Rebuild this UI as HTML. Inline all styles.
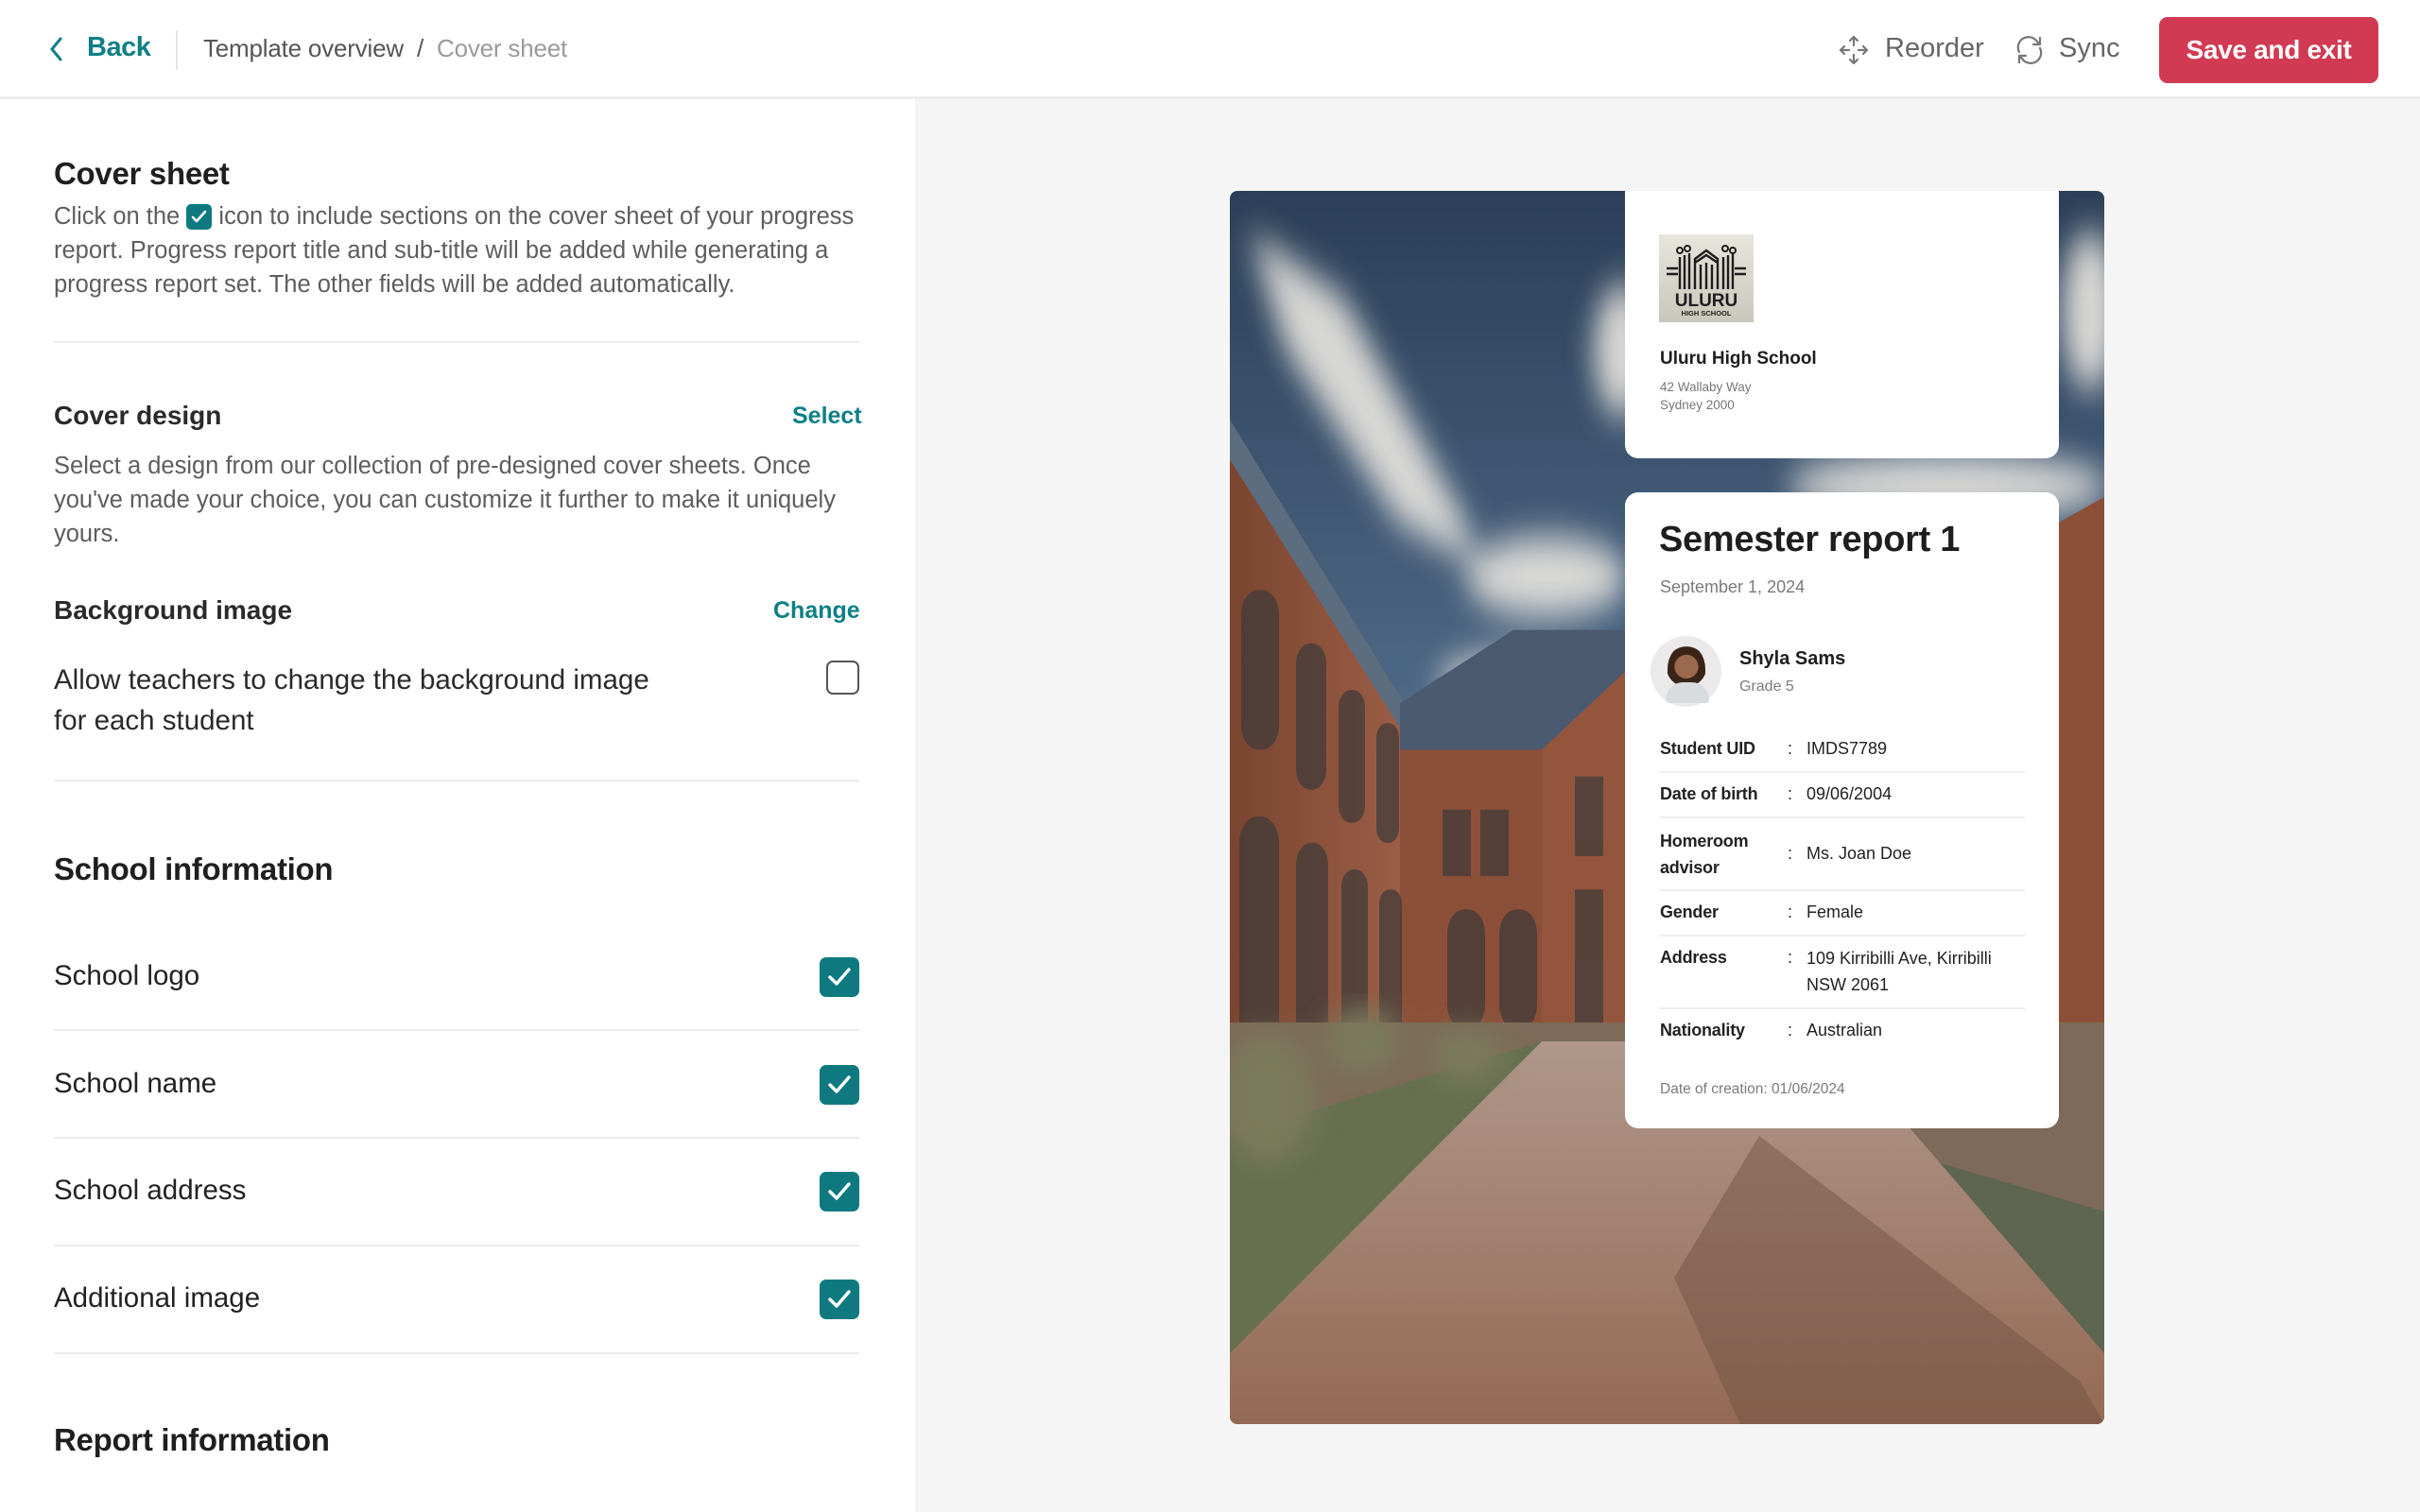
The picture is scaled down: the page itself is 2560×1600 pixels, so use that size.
<!DOCTYPE html>
<html><head><meta charset="utf-8"><style>
*{margin:0;padding:0;box-sizing:border-box}
body{width:2560px;height:1600px;overflow:hidden;font-family:"Liberation Sans",sans-serif;background:#fff;color:#222;position:relative}
.hdr{position:absolute;left:0;top:0;width:2560px;height:105px;background:#fff;border-bottom:3px solid #ececec}
.abs{position:absolute;white-space:nowrap}
.left{position:absolute;left:0;top:105px;width:968px;height:1495px;background:#fff}
.right{position:absolute;left:968px;top:105px;width:1592px;height:1495px;background:#f5f5f5}
.p{font-size:25.5px;color:#5d5d5d;letter-spacing:0;line-height:36px}
.h2{font-size:33px;font-weight:bold;color:#1f1f1f;letter-spacing:-0.3px}
.h3{font-size:29.5px;color:#222;letter-spacing:0}
.teal{color:#0e7f86}
.hr{position:absolute;left:57px;width:852px;height:2px;background:#ebebeb}
.cb{position:absolute;left:867px;width:42px;height:42px;border-radius:7px;background:#0e7a80}
.cb svg{position:absolute;left:7px;top:8px}
.card{position:absolute;left:1719px;width:459px;background:#fff}
.lbl{font-size:18px;font-weight:bold;color:#222;letter-spacing:-0.2px}
.val{font-size:18px;color:#222}
.rl{position:absolute;left:1755px;width:387px;height:2px;background:#eeeeee}
</style></head><body>
<div class="hdr"></div>
<svg class="abs" style="left:50px;top:38px" width="20" height="28" viewBox="0 0 20 28"><path d="M14 3 L5 14 L14 25" fill="none" stroke="#0e7f86" stroke-width="3" stroke-linecap="round"/></svg>
<div class="abs teal" style="left:92px;top:34px;font-size:29px;font-weight:bold;letter-spacing:-0.5px">Back</div>
<div class="abs" style="left:186px;top:32px;width:2px;height:42px;background:#e6e6e6"></div>
<div class="abs" style="left:215px;top:36px;font-size:26px;color:#555;letter-spacing:-0.2px">Template overview&nbsp; / &nbsp;<span style="color:#9a9a9a">Cover sheet</span></div>
<svg class="abs" style="left:1944px;top:36px" width="34" height="34" viewBox="0 0 34 34" fill="none" stroke="#777" stroke-width="2.2" stroke-linecap="round" stroke-linejoin="round"><path d="M17 3v9M13 7l4-4 4 4M17 31v-9M13 27l4 4 4-4M3 17h9M7 13l-4 4 4 4M31 17h-9M27 13l4 4-4 4"/></svg>
<div class="abs" style="left:1994px;top:35px;font-size:29px;color:#666">Reorder</div>
<svg class="abs" style="left:2130px;top:36px" width="34" height="34" viewBox="0 0 34 34" fill="none" stroke="#777" stroke-width="2.2" stroke-linecap="round" stroke-linejoin="round"><path d="M6 19a11 11 0 0 1 19-11l3 3M28 4v7h-7M28 15a11 11 0 0 1-19 11l-3-3M6 30v-7h7"/></svg>
<div class="abs" style="left:2178px;top:35px;font-size:29px;color:#666">Sync</div>
<div class="abs" style="left:2284px;top:18px;width:232px;height:70px;background:#d13a52;border-radius:9px;color:#fff;font-size:28px;font-weight:bold;text-align:center;line-height:70px;letter-spacing:-0.3px">Save and exit</div>

<div class="left"></div>
<div class="right"></div>

<div class="abs h2" style="left:57px;top:165px">Cover sheet</div>
<div class="abs p" style="left:57px;top:211px">Click on the <span style="display:inline-block;width:27px;height:27px;background:#0e7a80;border-radius:5px;vertical-align:-6px;position:relative"><svg style="position:absolute;left:5px;top:6px" width="17" height="15" viewBox="0 0 17 15"><path d="M2 8l4 4 9-10" fill="none" stroke="#fff" stroke-width="2.6" stroke-linecap="round" stroke-linejoin="round"/></svg></span> icon to include sections on the cover sheet of your progress<br>report. Progress report title and sub-title will be added while generating a<br>progress report set. The other fields will be added automatically.</div>
<div class="hr" style="top:361px"></div>

<div class="abs h3" style="left:57px;top:424px;font-weight:bold;color:#2a2a2a;font-size:28px">Cover design</div>
<div class="abs teal" style="left:838px;top:426px;font-size:25px;font-weight:bold">Select</div>
<div class="abs p" style="left:57px;top:475px">Select a design from our collection of pre-designed cover sheets. Once<br>you've made your choice, you can customize it further to make it uniquely<br>yours.</div>
<div class="abs h3" style="left:57px;top:630px;font-weight:bold;color:#2a2a2a;font-size:28px">Background image</div>
<div class="abs teal" style="left:818px;top:632px;font-size:25px;font-weight:bold">Change</div>
<div class="abs" style="left:57px;top:698px;font-size:29.5px;color:#2a2a2a;line-height:43px">Allow teachers to change the background image<br>for each student</div>
<div class="abs" style="left:874px;top:699px;width:35px;height:36px;border:2.5px solid #555;border-radius:7px"></div>
<div class="hr" style="top:825px"></div>

<div class="abs h2" style="left:57px;top:901px">School information</div>
<div class="abs h3" style="left:57px;top:1016px">School logo</div>
<div class="cb" style="top:1013px"><svg width="28" height="26" viewBox="0 0 28 26"><path d="M4 13l7 7 13-15" fill="none" stroke="#fff" stroke-width="3.4" stroke-linecap="round" stroke-linejoin="round"/></svg></div>
<div class="hr" style="top:1089px"></div>
<div class="abs h3" style="left:57px;top:1130px">School name</div>
<div class="cb" style="top:1127px"><svg width="28" height="26" viewBox="0 0 28 26"><path d="M4 13l7 7 13-15" fill="none" stroke="#fff" stroke-width="3.4" stroke-linecap="round" stroke-linejoin="round"/></svg></div>
<div class="hr" style="top:1203px"></div>
<div class="abs h3" style="left:57px;top:1243px">School address</div>
<div class="cb" style="top:1240px"><svg width="28" height="26" viewBox="0 0 28 26"><path d="M4 13l7 7 13-15" fill="none" stroke="#fff" stroke-width="3.4" stroke-linecap="round" stroke-linejoin="round"/></svg></div>
<div class="hr" style="top:1317px"></div>
<div class="abs h3" style="left:57px;top:1357px">Additional image</div>
<div class="cb" style="top:1354px"><svg width="28" height="26" viewBox="0 0 28 26"><path d="M4 13l7 7 13-15" fill="none" stroke="#fff" stroke-width="3.4" stroke-linecap="round" stroke-linejoin="round"/></svg></div>
<div class="hr" style="top:1431px"></div>
<div class="abs h2" style="left:57px;top:1505px">Report information</div>

<!-- background image approximation -->
<svg class="abs" style="left:1301px;top:202px;border-radius:8px" width="925" height="1305" viewBox="0 0 925 1305">
<defs>
<linearGradient id="sky" x1="0" y1="0" x2="0" y2="1"><stop offset="0" stop-color="#2b3f58"/><stop offset="0.4" stop-color="#4c6784"/><stop offset="0.68" stop-color="#9aa8b5"/></linearGradient>
<linearGradient id="path" x1="0" y1="0" x2="0" y2="1"><stop offset="0" stop-color="#b0978a"/><stop offset="1" stop-color="#946a55"/></linearGradient>
<linearGradient id="brick" x1="0" y1="0" x2="1" y2="0"><stop offset="0" stop-color="#7a4530"/><stop offset="1" stop-color="#a0624a"/></linearGradient>
<filter id="bl"><feGaussianBlur stdDeviation="14"/></filter>
</defs>
<rect width="925" height="1305" fill="url(#sky)"/>
<g transform="scale(1,1.408)">
<g filter="url(#bl)" fill="#e9e6e0" opacity="0.9">
<path d="M20 30 L120 80 L250 250 L260 280 L180 250 L60 120 Z"/>
<ellipse cx="335" cy="290" rx="85" ry="30"/>
<ellipse cx="290" cy="370" rx="70" ry="20"/>
<ellipse cx="415" cy="120" rx="30" ry="50"/>
<ellipse cx="760" cy="222" rx="170" ry="25"/>
<ellipse cx="910" cy="90" rx="30" ry="60"/>
</g>
<polygon points="0,172 210,415 210,640 0,680" fill="url(#brick)"/>
<polygon points="0,172 210,415 210,437 0,202" fill="#5d6d80"/>
<polygon points="180,390 420,385 420,640 180,640" fill="#8c5038"/>
<polygon points="180,385 300,330 420,330 420,420 180,420" fill="#4a5a70"/>
<polygon points="330,420 420,360 420,640 330,640" fill="#93563d"/>
<g fill="#3e3a3a" opacity="0.7">
<rect x="12" y="300" width="40" height="120" rx="18"/><rect x="70" y="340" width="32" height="110" rx="15"/><rect x="115" y="375" width="28" height="100" rx="13"/><rect x="155" y="400" width="24" height="90" rx="11"/>
<rect x="10" y="470" width="42" height="175" rx="20"/><rect x="70" y="490" width="34" height="160" rx="16"/><rect x="118" y="510" width="28" height="140" rx="13"/><rect x="158" y="525" width="24" height="125" rx="11"/>
<rect x="225" y="465" width="30" height="50" /><rect x="265" y="465" width="30" height="50"/><rect x="230" y="540" width="40" height="90" rx="18"/><rect x="285" y="540" width="40" height="90" rx="18"/><rect x="365" y="440" width="30" height="60"/><rect x="365" y="525" width="30" height="100"/>
</g>
<polygon points="875,250 925,230 925,650 875,655" fill="#8c5038"/>
</g>
<rect x="0" y="880" width="925" height="425" fill="#7d6a58"/>
<polygon points="0,1000 330,900 0,1280" fill="#66704e"/>
<polygon points="620,990 925,1080 925,1305 880,1305" fill="#5e6550"/>
<polygon points="330,900 640,900 925,1230 925,1305 0,1305 0,1230" fill="url(#path)"/>
<polygon points="560,1000 900,1260 925,1305 540,1305 470,1150" fill="#6e5040" opacity="0.45"/>
<g fill="#7a7a5c" filter="url(#bl)"><ellipse cx="40" cy="960" rx="50" ry="70"/><ellipse cx="140" cy="900" rx="40" ry="35"/><ellipse cx="250" cy="915" rx="40" ry="28"/></g>
</svg>

<div class="card" style="top:202px;height:283px;border-radius:0 0 14px 14px"></div>
<div class="abs" style="left:1755px;top:248px;width:100px;height:93px;background:linear-gradient(#e8e5dc,#c9c6bc);overflow:hidden">
<svg width="100" height="93" viewBox="0 0 100 93"><g stroke="#1d1d1d" stroke-width="2.4" fill="none"><path d="M22 58V24M27 58V22M32 58V20M68 58V24M73 58V22M78 58V20M38 58V26L50 17 62 26V58M44 58V32M50 58V30M56 58V32M38 30 50 22 62 30"/><path d="M8 36h12M8 42h12M80 36h12M80 42h12"/></g><circle cx="22" cy="17" r="3" fill="none" stroke="#1d1d1d" stroke-width="2"/><circle cx="30" cy="15" r="3" fill="none" stroke="#1d1d1d" stroke-width="2"/><circle cx="70" cy="15" r="3" fill="none" stroke="#1d1d1d" stroke-width="2"/><circle cx="78" cy="17" r="3" fill="none" stroke="#1d1d1d" stroke-width="2"/><text x="50" y="76" text-anchor="middle" font-family="Liberation Sans" font-weight="bold" font-size="19" fill="#1d1d1d">ULURU</text><text x="50" y="86" text-anchor="middle" font-family="Liberation Sans" font-weight="bold" font-size="7.5" fill="#1d1d1d">HIGH SCHOOL</text></svg></div>
<div class="abs" style="left:1756px;top:369px;font-size:19px;font-weight:bold;color:#1e1e1e">Uluru High School</div>
<div class="abs" style="left:1756px;top:400px;font-size:13.5px;color:#777;line-height:19px">42 Wallaby Way<br>Sydney 2000</div>

<div class="card" style="top:521px;height:673px;border-radius:14px"></div>
<div class="abs" style="left:1755px;top:550px;font-size:38px;font-weight:bold;color:#1e1e1e;letter-spacing:-0.3px">Semester report 1</div>
<div class="abs" style="left:1756px;top:611px;font-size:18px;color:#7a7a7a">September 1, 2024</div>
<div class="abs" style="left:1746px;top:673px;width:75px;height:75px;border-radius:50%;background:#ece9ea"></div>
<div class="abs" style="left:1764px;top:682px;width:40px;height:52px;border-radius:50% 50% 40% 40%;background:radial-gradient(circle at 50% 45%,#9b6a4e 0 35%,#3a2418 37% 60%,transparent 62%)"></div>
<div class="abs" style="left:1762px;top:722px;width:46px;height:22px;border-radius:20px 20px 4px 4px;background:#d8dcdf"></div>
<div class="abs" style="left:1840px;top:686px;font-size:20px;font-weight:bold;color:#1e1e1e">Shyla Sams</div>
<div class="abs" style="left:1840px;top:718px;font-size:16px;color:#7a7a7a">Grade 5</div>

<div class="abs lbl" style="left:1756px;top:782px">Student UID</div><div class="abs val" style="left:1891px;top:782px">:</div><div class="abs val" style="left:1911px;top:782px">IMDS7789</div>
<div class="rl" style="top:816px"></div>
<div class="abs lbl" style="left:1756px;top:830px">Date of birth</div><div class="abs val" style="left:1891px;top:830px">:</div><div class="abs val" style="left:1911px;top:830px">09/06/2004</div>
<div class="rl" style="top:864px"></div>
<div class="abs lbl" style="left:1756px;top:876px;line-height:28px">Homeroom<br>advisor</div><div class="abs val" style="left:1891px;top:893px">:</div><div class="abs val" style="left:1911px;top:893px">Ms. Joan Doe</div>
<div class="rl" style="top:941px"></div>
<div class="abs lbl" style="left:1756px;top:955px">Gender</div><div class="abs val" style="left:1891px;top:955px">:</div><div class="abs val" style="left:1911px;top:955px">Female</div>
<div class="rl" style="top:989px"></div>
<div class="abs lbl" style="left:1756px;top:1003px">Address</div><div class="abs val" style="left:1891px;top:1003px">:</div><div class="abs val" style="left:1911px;top:1000px;line-height:28px">109 Kirribilli Ave, Kirribilli<br>NSW 2061</div>
<div class="rl" style="top:1066px"></div>
<div class="abs lbl" style="left:1756px;top:1080px">Nationality</div><div class="abs val" style="left:1891px;top:1080px">:</div><div class="abs val" style="left:1911px;top:1080px">Australian</div>
<div class="abs" style="left:1756px;top:1144px;font-size:15.5px;color:#7a7a7a">Date of creation: 01/06/2024</div>
</body></html>
